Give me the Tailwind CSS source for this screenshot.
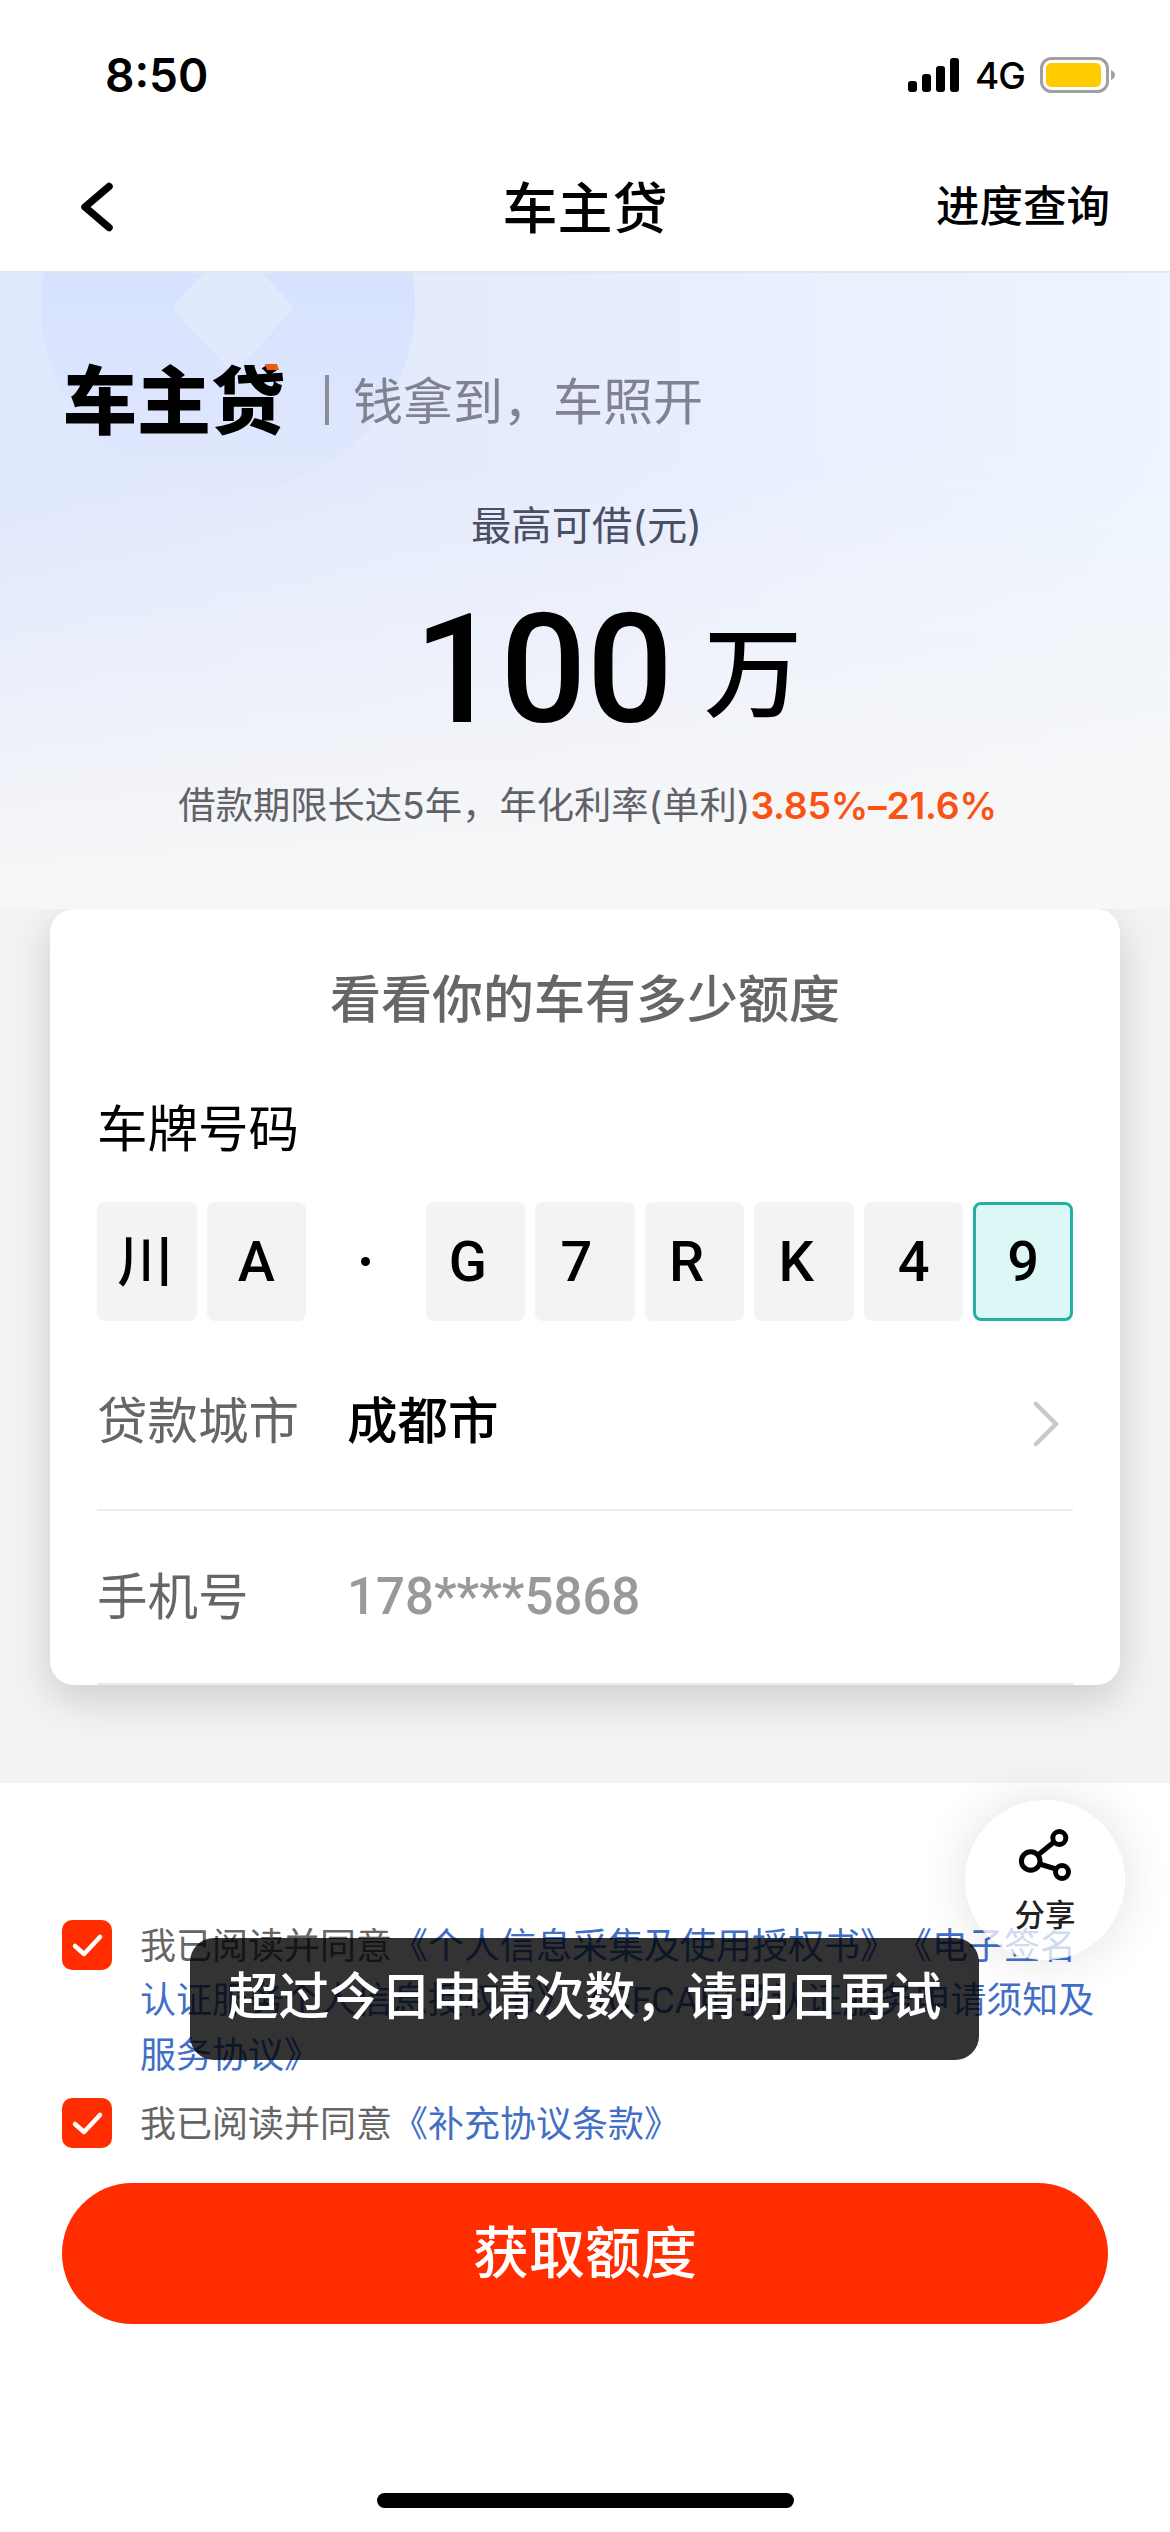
<!DOCTYPE html>
<html lang="zh-CN">
<head>
<meta charset="utf-8">
<title>车主贷</title>
<script src="https://cdn.jsdelivr.net/npm/@tailwindcss/browser@4"></script>
</head>
<body class="bg-white">
<div class="relative w-[1170px] h-[2532px] overflow-hidden flex flex-col bg-white text-black font-['Inter','Noto_Sans_CJK_SC',sans-serif] [text-spacing-trim:space-all]">

  <!-- status bar -->
  <div class="h-[147px] shrink-0 flex items-center justify-between pl-[105px] pr-[54px] pt-[2px]">
    <span class="text-[46px] leading-none font-semibold">8:50</span>
    <div class="flex items-center">
      <svg class="w-[52px] h-[34px]" viewBox="0 0 52 34"><rect x="0" y="23" width="9" height="11" rx="3"/><rect x="14" y="16" width="9" height="18" rx="3"/><rect x="28" y="8" width="9" height="26" rx="3"/><rect x="42" y="0" width="9" height="34" rx="3"/></svg>
      <span class="ml-[15px] text-[37px] leading-none w-[50px] pt-[2px] tracking-[-1px] font-medium">4G</span>
      <svg class="ml-[15px] w-[76px] h-[36px]" viewBox="0 0 76 36"><rect x="1.5" y="1.5" width="66" height="33" rx="10" fill="none" stroke="#a0a0a0" stroke-width="3"/><rect x="6" y="6" width="55" height="24" rx="5" fill="#ffcc00"/><path d="M71 13c2.500 1 4 2.700 4 5s-1.500 4-4 5z" fill="#a0a0a0"/></svg>
    </div>
  </div>

  <!-- navigation -->
  <div class="h-[126px] shrink-0 border-b-2 border-[#e5e6e9] grid grid-cols-3 items-center pl-[80px] pr-[60px]">
    <svg class="-mt-[4px] w-[34px] h-[50px]" viewBox="0 0 34 50" fill="none" stroke="#000" stroke-width="7.500" stroke-linecap="round" stroke-linejoin="round"><path d="M29 4.500L5 25l24 20.500"/></svg>
    <h1 class="justify-self-center -ml-[20px] -mt-[2px] text-[55px] leading-none font-medium whitespace-nowrap">车主贷</h1>
    <span class="justify-self-end -mt-[5px] text-[43.500px] leading-none font-medium">进度查询</span>
  </div>

  <!-- hero -->
  <div class="relative h-[636px] shrink-0 overflow-hidden bg-linear-to-r from-[#e0e8fd] via-[#e6ecfd] via-50% to-[#edf5ff]">
    <svg class="absolute left-0 top-0 w-[1170px] h-[636px]" viewBox="0 0 1170 636">
      <defs>
        <linearGradient id="disc" x1="0" y1="0" x2="0" y2="1"><stop offset="0.400" stop-color="#d6e2fe"/><stop offset="1" stop-color="#e1e8fd"/></linearGradient>
        <linearGradient id="fade" x1="0.450" y1="0" x2="0.550" y2="1"><stop offset="0.300" stop-color="#f7f7f7" stop-opacity="0"/><stop offset="0.920" stop-color="#f7f7f7"/></linearGradient>
      </defs>
      <circle cx="228" cy="32" r="187" fill="url(#disc)"/>
      <path d="M233 -32l57 62q5 5 0 10l-51 54q-6 6-12 0l-51-54q-5-5 0-10z" fill="#e1eafd"/>
      <rect width="1170" height="636" fill="url(#fade)"/>
    </svg>
    <div class="relative flex flex-col pt-[89px]">
      <div class="h-[76px] flex items-center pl-[63px]">
        <div class="relative mt-[2px] w-[225px] text-[74px] leading-[76px] font-black whitespace-nowrap">车主贷<span class="absolute left-[203px] top-[1px] w-[12px] h-[6px] bg-[#ee5a10] skew-x-[20deg]"></span></div>
        <div class="ml-[37px] w-[4px] h-[50px] bg-[#8a8e9b]"></div>
        <span class="ml-[24px] mt-[4px] text-[50px] leading-none text-[#80838f]">钱拿到，车照开</span>
      </div>
      <div class="mt-[58px] h-[60px] flex items-center justify-center pl-[3px] text-[40.300px] text-[#4b4f63]">最高可借(元)</div>
      <div class="mt-[34px] h-[160px] flex items-center justify-center pl-[46px]">
        <span class="text-[152px] leading-none font-medium font-['Roboto']">100</span>
        <span class="ml-[31px] mt-[7px] text-[98px] leading-none font-medium">万</span>
      </div>
      <div class="mt-[31px] h-[50px] flex items-center justify-center pl-[5px] text-[37.300px] text-[#606268] whitespace-nowrap">借款期限长达5年，年化利率(单利)<span class="font-semibold tracking-[-0.200px] text-[#fb5212]">3.85%–21.6%</span></div>
    </div>
  </div>

  <!-- form card -->
  <div class="h-[874px] shrink-0 bg-[#f3f3f3] px-[50px] overflow-hidden">
    <div class="h-[776px] rounded-[24px] bg-white shadow-[0_14px_42px_rgba(0,0,0,0.160)] px-[47px] flex flex-col">
      <h2 class="mt-[61px] h-[60px] flex items-center justify-center text-[51px] font-medium text-[#666]">看看你的车有多少额度</h2>
      <div class="mt-[69px] h-[60px] flex items-center text-[50.500px]">车牌号码</div>
      <div class="mt-[43px] grid grid-cols-9 gap-[10px] h-[119px] text-[56px] font-medium font-['Roboto','Noto_Sans_CJK_SC'] *:flex *:items-center *:justify-center *:rounded-[8px]">
        <div class="bg-[#f2f3f5] pr-[3px]">川</div>
        <div class="bg-[#f2f3f5]">A</div>
        <div><span class="w-[9px] h-[9px] rounded-full bg-black"></span></div>
        <div class="bg-[#f2f3f5] pr-[15px]">G</div>
        <div class="bg-[#f2f3f5] pr-[17px]">7</div>
        <div class="bg-[#f2f3f5] pr-[16px]">R</div>
        <div class="bg-[#f2f3f5] pr-[16px]">K</div>
        <div class="bg-[#f2f3f5]">4</div>
        <div class="bg-[#dbf8f6] border-[3px] border-[#25b0a5]">9</div>
      </div>
      <div class="h-[190px] border-b-2 border-[#ededed] flex items-center pt-[18px] text-[50.500px]">
        <span class="w-[250px] pb-[7px] text-[#666]">贷款城市</span>
        <span class="pb-[7px] font-medium">成都市</span>
        <svg class="ml-auto mr-[14px] w-[26px] h-[46px]" viewBox="0 0 26 46" fill="none" stroke="#c8c8c8" stroke-width="4.500" stroke-linecap="round" stroke-linejoin="round"><path d="M3 3l20 20L3 43"/></svg>
      </div>
      <div class="h-[174px] border-b-2 border-[#ebebeb] flex items-center text-[50.500px]">
        <span class="w-[250px] text-[#666]">手机号</span>
        <span class="font-medium font-['Roboto'] text-[51px] text-[#999]">178****5868</span>
      </div>
    </div>
  </div>

  <!-- agreements -->
  <div class="flex flex-col px-[62px] pt-[136px] text-[36px] leading-[54px] text-[#666]">
    <div class="flex">
      <svg class="mt-px w-[50px] h-[50px] shrink-0" viewBox="0 0 50 50"><rect width="50" height="50" rx="10" fill="#ff2d00"/><path d="M13 26l9 8 16-17" fill="none" stroke="#fff" stroke-width="4.500" stroke-linecap="round" stroke-linejoin="round"/></svg>
      <p class="ml-[28px] whitespace-nowrap">我已阅读并同意<span class="text-[#416fc6]">《个人信息采集及使用授权书》《电子签名<br>认证服务个人信息授权书》《<span class="font-['Roboto']">CFCA</span>电子认证服务申请须知及<br>服务协议》</span></p>
    </div>
    <div class="flex mt-[15px]">
      <svg class="mt-px w-[50px] h-[50px] shrink-0" viewBox="0 0 50 50"><rect width="50" height="50" rx="10" fill="#ff2d00"/><path d="M13 26l9 8 16-17" fill="none" stroke="#fff" stroke-width="4.500" stroke-linecap="round" stroke-linejoin="round"/></svg>
      <p class="ml-[28px] whitespace-nowrap">我已阅读并同意<span class="text-[#416fc6]">《补充协议条款》</span></p>
    </div>
    <button class="mt-[32px] h-[141px] rounded-full bg-[#ff2d00] text-white text-[56px] font-medium flex items-center justify-center pb-[2px]">获取额度</button>
  </div>

  <!-- toast -->
  <div class="absolute left-[190px] top-[1938px] w-[789px] h-[122px] rounded-[24px] bg-black/80 flex items-center justify-center pb-[4px] text-white text-[51px] font-medium whitespace-nowrap">超过今日申请次数，请明日再试</div>

  <!-- share button -->
  <div class="absolute left-[965px] top-[1800px] w-[160px] h-[160px] rounded-full bg-linear-to-b from-white from-60% to-white/75 to-75% shadow-[0_0_50px_rgba(0,0,0,0.120)] flex flex-col items-center pt-[28px]">
    <svg class="w-[54px] h-[54px]" viewBox="0 0 54 54" fill="none" stroke="#000" stroke-width="5"><circle cx="12.700" cy="33" r="9.300"/><circle cx="41.300" cy="10" r="6.500"/><circle cx="44" cy="44" r="6.500"/><path d="M20 27l16-13M21.500 36l16.500 5"/></svg>
    <span class="mt-[18px] text-[30.500px] leading-[30px] font-medium text-[#222]">分享</span>
  </div>

  <!-- home indicator -->
  <div class="absolute left-[377px] bottom-[24px] w-[417px] h-[15px] rounded-full bg-black"></div>
</div>
</body>
</html>
